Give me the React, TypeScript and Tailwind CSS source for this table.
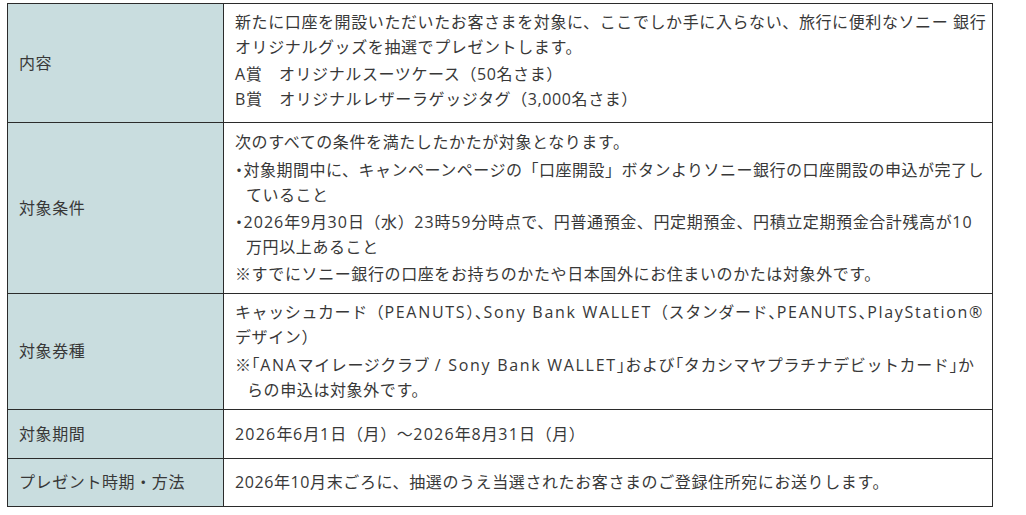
import React from "react";

const font = {
  fontFamily: '"Open Sans", "Noto Sans CJK JP", sans-serif',
};

const halt = { fontFeatureSettings: '"halt"' };

function H({ c }: { c: string }) {
  return <span style={halt}>{c}</span>;
}

function L({ t }: { t: string }) {
  return <span className="tracking-[1.7px]">{t}</span>;
}

function Label({ children }: { children: React.ReactNode }) {
  return (
    <td className="w-[216px] border border-[#2b2b2b] bg-[#c9dddf] pl-[11px] align-middle">
      {children}
    </td>
  );
}

function Body({ children }: { children: React.ReactNode }) {
  return (
    <td className="border border-[#2b2b2b] bg-white pl-[11px] pr-1 align-middle">
      {children}
    </td>
  );
}

export default function App() {
  return (
    <div className="min-h-[515px] w-[1026px] bg-white pl-[7px] pt-[3px]" style={font}>
      <table className="w-[986px] border-collapse text-[16px] leading-[25px] tracking-[0.6px] text-[#383838]">
        <tbody>
          <tr className="h-[119px]">
            <Label>内容</Label>
            <Body>
              <p className="-mt-1 whitespace-nowrap">
                新たに口座を開設いただいたお客さまを対象に、ここでしか手に入らない、旅行に便利なソニー 銀行
                <br />
                オリジナルグッズを抽選でプレゼントします。
              </p>
              <p className="mt-[2px]">A賞　オリジナルスーツケース（50名さま）</p>
              <p>B賞　オリジナルレザーラゲッジタグ（3,000名さま）</p>
            </Body>
          </tr>
          <tr className="h-[171px]">
            <Label>対象条件</Label>
            <Body>
              <p>次のすべての条件を満たしたかたが対象となります。</p>
              <p className="mt-[3px] whitespace-nowrap pl-[11px] -indent-[11px] tracking-[0.5px]">
                <H c="・" />対象期間中に、キャンペーンページの「口座開設」ボタンよりソニー銀行の口座開設の申込が完了し
                <br />
                ていること
              </p>
              <p className="mt-[2px] whitespace-nowrap pl-[11px] -indent-[11px]">
                <H c="・" />
                <span className="tracking-[1px]">2026</span>年<span className="tracking-[1px]">9</span>月
                <span className="tracking-[1px]">30</span>日（水）<span className="tracking-[1px]">23</span>時
                <span className="tracking-[1px]">59</span>分時点で、円普通預金、円定期預金、円積立定期預金合計残高が
                <span className="tracking-[1px]">10</span>
                <br />
                万円以上あること
              </p>
              <p className="mt-[2px] whitespace-nowrap">
                ※すでにソニー銀行の口座をお持ちのかたや日本国外にお住まいのかたは対象外です。
              </p>
            </Body>
          </tr>
          <tr className="h-[116px]">
            <Label>対象券種</Label>
            <Body>
              <p className="whitespace-nowrap">
                キャッシュカード（<L t="PEANUTS" />）<H c="、" />
                <L t="Sony Bank WALLET" />（スタンダード<H c="、" />
                <L t="PEANUTS" />
                <H c="、" />
                <L t="PlayStation®" />
                <br />
                デザイン）
              </p>
              <p className="mt-[3px] whitespace-nowrap pl-[12px] -indent-[12px]">
                ※<H c="「" />
                <L t="ANA" />
                マイレージクラブ <L t="/ Sony Bank WALLET" />
                <H c="」" />
                および<H c="「" />
                タカシマヤプラチナデビットカード<H c="」" />か
                <br />
                らの申込は対象外です。
              </p>
            </Body>
          </tr>
          <tr className="h-[49px]">
            <Label>対象期間</Label>
            <Body>
              <p className="whitespace-nowrap">
                <span className="tracking-[1.2px]">2026</span>年<span className="tracking-[1.2px]">6</span>月
                <span className="tracking-[1.2px]">1</span>日（月）～<span className="tracking-[1.2px]">2026</span>年
                <span className="tracking-[1.2px]">8</span>月<span className="tracking-[1.2px]">31</span>日（月）
              </p>
            </Body>
          </tr>
          <tr className="h-[48px]">
            <Label>プレゼント時期・方法</Label>
            <Body>
              <p>2026年10月末ごろに、抽選のうえ当選されたお客さまのご登録住所宛にお送りします。</p>
            </Body>
          </tr>
        </tbody>
      </table>
    </div>
  );
}
